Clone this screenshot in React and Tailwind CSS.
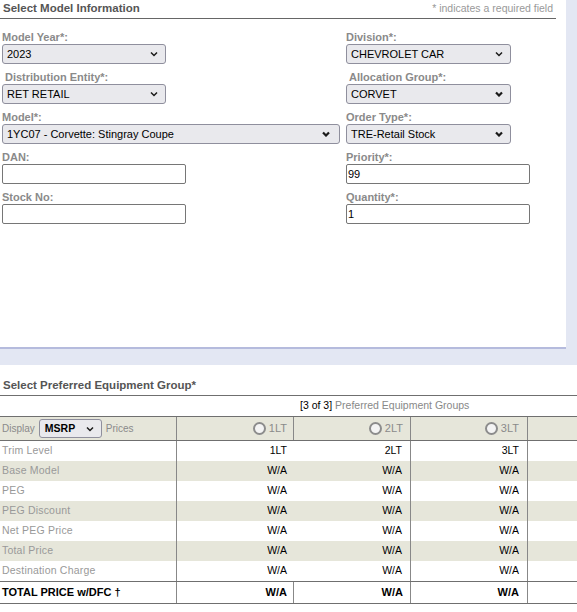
import React from 'react'

const Chevron = ({ bold }) => (
  <svg width="8" height="6" viewBox="0 0 8 6" className="shrink-0">
    <path
      d="M1 1.5 L4 4.5 L7 1.5"
      stroke="#1a1a1a"
      strokeWidth={bold ? 2.2 : 1.5}
      fill="none"
    />
  </svg>
)

const Select = ({ value, className, bold }) => (
  <div
    className={`flex h-[20px] items-center justify-between rounded-[3px] border border-[#8f8f9d] bg-[#e9e9ed] pl-[4px] pr-[7px] text-[11px] text-black ${className}`}
  >
    <span>{value}</span>
    <Chevron bold={bold} />
  </div>
)

const Input = ({ value, className }) => (
  <div
    className={`flex h-[20px] items-center rounded-[2px] border border-[#767676] bg-white pl-[1px] text-[11px] text-black ${className}`}
  >
    {value}
  </div>
)

const Field = ({ label, indent, children }) => (
  <div className="flex flex-col">
    <div className={`h-[13px] text-[11px] font-bold leading-[13px] text-[#8a8a8a] ${indent ? 'pl-[3px]' : ''}`}>
      {label}
    </div>
    {children}
  </div>
)

const Radio = ({ label }) => (
  <div className="flex items-center justify-end gap-[3px] text-[11px] text-[#8a8a8a]">
    <span className="h-[13px] w-[13px] rounded-full border-2 border-[#8c8c8c] bg-[#f4f4f4]" />
    <span>{label}</span>
  </div>
)

const rows = [
  ['Trim Level', '1LT', '2LT', '3LT'],
  ['Base Model', 'W/A', 'W/A', 'W/A'],
  ['PEG', 'W/A', 'W/A', 'W/A'],
  ['PEG Discount', 'W/A', 'W/A', 'W/A'],
  ['Net PEG Price', 'W/A', 'W/A', 'W/A'],
  ['Total Price', 'W/A', 'W/A', 'W/A'],
  ['Destination Charge', 'W/A', 'W/A', 'W/A'],
]

export default function App() {
  return (
    <div className="w-[577px] bg-[#e3e7f3] font-['Liberation_Sans',Arial,sans-serif]">
      {/* model information */}
      <div className="h-[349px] w-[566px] border-b-2 border-[#b5bbdd] bg-white">
        <div className="mr-[10px] flex h-[19px] items-start justify-between border-b border-[#666] px-[3px] pt-[1px]">
          <span className="text-[11.5px] font-bold leading-[14px] text-[#555]">Select Model Information</span>
          <span className="text-[10.5px] leading-[14px] text-[#999]">* indicates a required field</span>
        </div>

        <div className="mt-[12px] grid grid-cols-[344px_1fr] gap-y-[7px] pl-[2px]">
          <Field label="Model Year*:">
            <Select value="2023" className="w-[164px]" />
          </Field>
          <Field label="Division*:">
            <Select value="CHEVROLET CAR" className="w-[165px]" />
          </Field>

          <Field label="Distribution Entity*:" indent>
            <Select value="RET RETAIL" className="w-[164px]" />
          </Field>
          <Field label="Allocation Group*:" indent>
            <Select value="CORVET" className="w-[165px]" bold />
          </Field>

          <Field label="Model*:">
            <Select value="1YC07 - Corvette: Stingray Coupe" className="w-[338px] pr-[9px]" bold />
          </Field>
          <Field label="Order Type*:">
            <Select value="TRE-Retail Stock" className="w-[165px]" bold />
          </Field>

          <Field label="DAN:">
            <Input value="" className="w-[184px]" />
          </Field>
          <Field label="Priority*:">
            <Input value="99" className="w-[184px]" />
          </Field>

          <Field label="Stock No:">
            <Input value="" className="w-[184px]" />
          </Field>
          <Field label="Quantity*:">
            <Input value="1" className="w-[184px]" />
          </Field>
        </div>
      </div>

      <div className="h-[16px]" />

      {/* preferred equipment group */}
      <div className="h-[247px] bg-white">
        <div className="flex h-[31px] items-end border-b border-[#6f6f6f] px-[3px] pb-[3px]">
          <span className="text-[11.5px] font-bold leading-[14px] text-[#555]">Select Preferred Equipment Group*</span>
        </div>

        <div className="flex h-[21px] items-center border-b border-[#6f6f6f] pl-[300px] text-[10.5px]">
          <span className="text-black">[3 of 3]</span>
          <span className="ml-[3px] text-[#888]">Preferred Equipment Groups</span>
        </div>

        <div className="flex h-[24px] border-b border-[#6f6f6f] bg-[#e6e6da]">
          <div className="flex w-[176px] items-center pl-[2px] text-[10px] text-[#8a8a8a]">
            <span>Display</span>
            <div className="mx-[4px] flex h-[19px] w-[63px] items-center justify-between rounded-[3px] border border-[#8f8f9d] bg-[#e9e9ed] pl-[5px] pr-[7px] text-[10.5px] font-bold text-black">
              <span>MSRP</span>
              <Chevron />
            </div>
            <span>Prices</span>
          </div>
          <div className="flex w-[117px] items-center justify-end border-l border-[#888] pr-[6px]">
            <Radio label="1LT" />
          </div>
          <div className="flex w-[117px] items-center justify-end border-l border-[#888] pr-[7px]">
            <Radio label="2LT" />
          </div>
          <div className="flex w-[117px] items-center justify-end border-l border-[#888] pr-[8px]">
            <Radio label="3LT" />
          </div>
          <div className="flex-1 border-l border-[#888]" />
        </div>

        {rows.map((r, i) => (
          <div key={r[0]} className={`flex h-[20px] text-[10.5px] ${i % 2 ? 'bg-[#e6e6da]' : 'bg-white'}`}>
            <div className="flex w-[176px] items-center pl-[2px] tracking-[0.2px] text-[#999]">{r[0]}</div>
            <div className="flex w-[117px] items-center justify-end border-l border-[#888] pr-[6px] text-black">{r[1]}</div>
            <div className="flex w-[117px] items-center justify-end pr-[8px] text-black">{r[2]}</div>
            <div className="flex w-[117px] items-center justify-end border-l border-[#888] pr-[8px] text-black">{r[3]}</div>
            <div className="flex-1 border-l border-[#888]" />
          </div>
        ))}

        <div className="flex h-[23px] border-y border-[#6f6f6f] text-[11px] font-bold text-black">
          <div className="flex w-[176px] items-center pl-[2px]">TOTAL PRICE w/DFC †</div>
          <div className="flex w-[117px] items-center justify-end border-l border-[#888] pr-[6px]">W/A</div>
          <div className="flex w-[117px] items-center justify-end border-l border-[#888] pr-[7px]">W/A</div>
          <div className="flex w-[117px] items-center justify-end border-l border-[#888] pr-[8px]">W/A</div>
          <div className="flex-1 border-l border-[#888]" />
        </div>
      </div>
    </div>
  )
}
